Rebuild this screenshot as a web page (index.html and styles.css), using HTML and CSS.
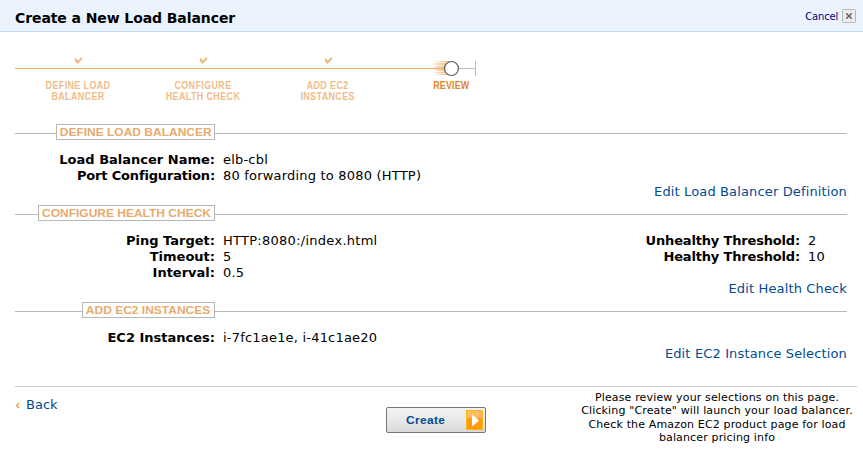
FILE: index.html
```html
<!DOCTYPE html>
<html lang="en">
<head>
<meta charset="utf-8">
<title>Create a New Load Balancer</title>
<link rel="stylesheet" href="styles.css">
</head>
<body>
<header class="titlebar">
  <h1>Create a New Load Balancer</h1>
  <a class="cancel">Cancel
    <svg width="15" height="15" viewBox="0 0 15 15"><rect x=".5" y=".5" width="13" height="13" rx="1" fill="#eee" stroke="#b5b5b5"/><path d="M4.200 4.200l5.600 5.600M9.800 4.200l-5.600 5.600" stroke="#666" stroke-width="1.600"/></svg>
  </a>
</header>
<main>
  <div class="stepper">
    <svg class="track" width="462" height="24" viewBox="0 0 462 24">
      <defs><linearGradient id="trail"><stop offset="0" stop-color="#f3a560" stop-opacity="0"/><stop offset="1" stop-color="#f3a560" stop-opacity=".75"/></linearGradient></defs>
      <path d="M0 13.500H430" stroke="#eaa868"/>
      <path d="M436 13.500H460M460.500 6V21" stroke="#bbb" fill="none"/>
      <path d="M420 6h15v1h-15zM417 8h17v2h-17zM415 11h18v2h-18zM420 14h14v2h-14zM417 17h17v1h-17zM421 19h14v1h-14z" fill="url(#trail)"/>
      <path d="M420 6.500h14v13h-12l-3-4 2-3-3-3z" fill="url(#trail)" opacity=".6"/>
      <circle cx="436.500" cy="13.500" r="7" fill="#fff" stroke="#5c5c5c" stroke-width="1.200"/>
      <g fill="#f0bc8a"><path id="tick" d="M60 3h1v1h1v1h2V4h1V3h1V2h1v3h-1v1h-1v1h-1v1h-1v1h-1V8h-1V7h-1z"/><use href="#tick" x="125"/><use href="#tick" x="250"/></g>
    </svg>
    <ol class="steps">
      <li><span>DEFINE LOAD<br>BALANCER</span></li>
      <li><span>CONFIGURE<br>HEALTH CHECK</span></li>
      <li><span>ADD EC2<br>INSTANCES</span></li>
      <li class="current"><span>REVIEW</span></li>
    </ol>
  </div>

  <section>
    <div class="rule"><h2 class="w1"><span>DEFINE LOAD BALANCER</span></h2></div>
    <div class="cols">
      <dl><dt>Load Balancer Name:</dt><dd>elb-cbl</dd><dt class="tight">Port Configuration:</dt><dd>80 forwarding to 8080 (HTTP)</dd></dl>
    </div>
    <a class="edit">Edit Load Balancer Definition</a>
  </section>
  <section>
    <div class="rule"><h2 class="w2"><span>CONFIGURE HEALTH CHECK</span></h2></div>
    <div class="cols">
      <dl><dt>Ping Target:</dt><dd class="wide">HTTP:8080:/index.html</dd><dt>Timeout:</dt><dd>5</dd><dt>Interval:</dt><dd>0.5</dd></dl>
      <dl class="thresholds"><dt class="tight">Unhealthy Threshold:</dt><dd>2</dd><dt class="tight">Healthy Threshold:</dt><dd>10</dd></dl>
    </div>
    <a class="edit">Edit Health Check</a>
  </section>
  <section>
    <div class="rule"><h2 class="w3"><span>ADD EC2 INSTANCES</span></h2></div>
    <div class="cols">
      <dl><dt>EC2 Instances:</dt><dd>i-7fc1ae1e, i-41c1ae20</dd></dl>
    </div>
    <a class="edit">Edit EC2 Instance Selection</a>
  </section>
</main>
<footer>
  <a class="back"><svg width="5" height="7" viewBox="0 0 5 7"><path d="M4 1L1.500 3.500 4 6" fill="none" stroke="#f29a4a" stroke-width="1.400"/></svg>Back</a>
  <button class="create"><span>Create</span>
    <svg width="17" height="20" viewBox="0 0 17 20"><rect width="17" height="20" fill="#ff9c08"/><path d="M0 0h17v8H0z" fill="#ffbc62"/><rect x=".5" y=".5" width="16" height="19" fill="none" stroke="#ffb31a"/><path d="M6 4.500l7 6-7 6z" fill="#fff"/></svg>
  </button>
  <p class="note">Please review your selections on this page.<br>Clicking "Create" will launch your load balancer.<br>Check the Amazon EC2 product page for load<br>balancer pricing info</p>
</footer>
</body>
</html>
```
FILE: styles.css
```css
* { box-sizing: border-box; }
body { margin: 0; background: #fff; color: #000; font: 13px/16px "DejaVu Sans", Verdana, sans-serif; }
h1, h2, dl, dd, ol, p { margin: 0; padding: 0; }
a { color: #004b91; white-space: nowrap; }
.titlebar { display: flex; justify-content: space-between; height: 32px; padding: 9px 6px 0 15px; background: #eaf3fe; border-bottom: 1px solid #c4daee; }
h1 { font-size: 14px; line-height: 18px; white-space: nowrap; letter-spacing: -.09px; }
.cancel { display: flex; gap: 4px; height: 15px; font-size: 10px; line-height: 15px; letter-spacing: -.2px; color: #000080; }
main { padding: 0 16px 0 15px; }
.stepper { height: 92px; padding-top: 23px; }
.track { display: block; }
.steps { display: flex; list-style: none; }
.steps li { width: 125px; text-align: center; font: bold 11px/11px "Liberation Sans", sans-serif; letter-spacing: .5px; color: #f0bc8a; padding: 1px 0 0 1px; }
.steps span { display: inline-block; transform: scaleX(.81); }
.steps .current { color: #e5842c; margin-left: -2px; }
.steps .current span { letter-spacing: .2px; }
section { padding-bottom: 6px; }
.rule { display: flex; justify-content: flex-end; width: 832px; height: 16px; padding-right: 632px; background: linear-gradient(#b7b7b7, #b7b7b7) 0 9px / 100% 1px no-repeat; }
h2 { height: 16px; border: 1px solid #b7b7b7; background: #fff; color: #e8ab6d; font: bold 11px/15px "Liberation Sans", Arial, sans-serif; text-align: center; white-space: nowrap; }
h2 span { display: inline-block; transform: scaleX(1.09); }
.w1 { width: 159px; }
.w2 { width: 177px; }
.w3 { width: 133px; }
.cols { display: flex; justify-content: space-between; margin-top: 12px; }
dl { display: grid; grid-template-columns: 200px auto; column-gap: 8px; align-content: start; }
dt { font-weight: bold; text-align: right; white-space: nowrap; }
dd { letter-spacing: .2px; }
.wide { letter-spacing: .27px; }
.tight { letter-spacing: -.17px; }
.thresholds { grid-template-columns: 160px 39px; }
.edit { display: block; margin-bottom: -1px; text-align: right; letter-spacing: .14px; }
footer { display: grid; grid-template-columns: 371px 100px 1fr; margin: 19px 6px 0 15px; border-top: 1px solid #ccc; }
.back { display: flex; align-items: center; gap: 6px; height: 16px; margin-top: 10px; }
.create { display: flex; align-items: center; justify-content: space-between; width: 100px; height: 26px; margin-top: 20px; padding: 0 2px 0 19px; border: 1px solid #777; border-radius: 2px; background: linear-gradient(#f3f3f3, #e9e9e9 50%, #d9d9d9); color: #004b91; font: bold 11px/16px "Liberation Sans", Arial, sans-serif; letter-spacing: .3px; }
.create span { transform: scaleX(1.09); transform-origin: left; }
.note { justify-self: end; width: 280px; margin-top: 4px; font-size: 11px; line-height: 13.330px; letter-spacing: .15px; text-align: center; white-space: nowrap; }
```
